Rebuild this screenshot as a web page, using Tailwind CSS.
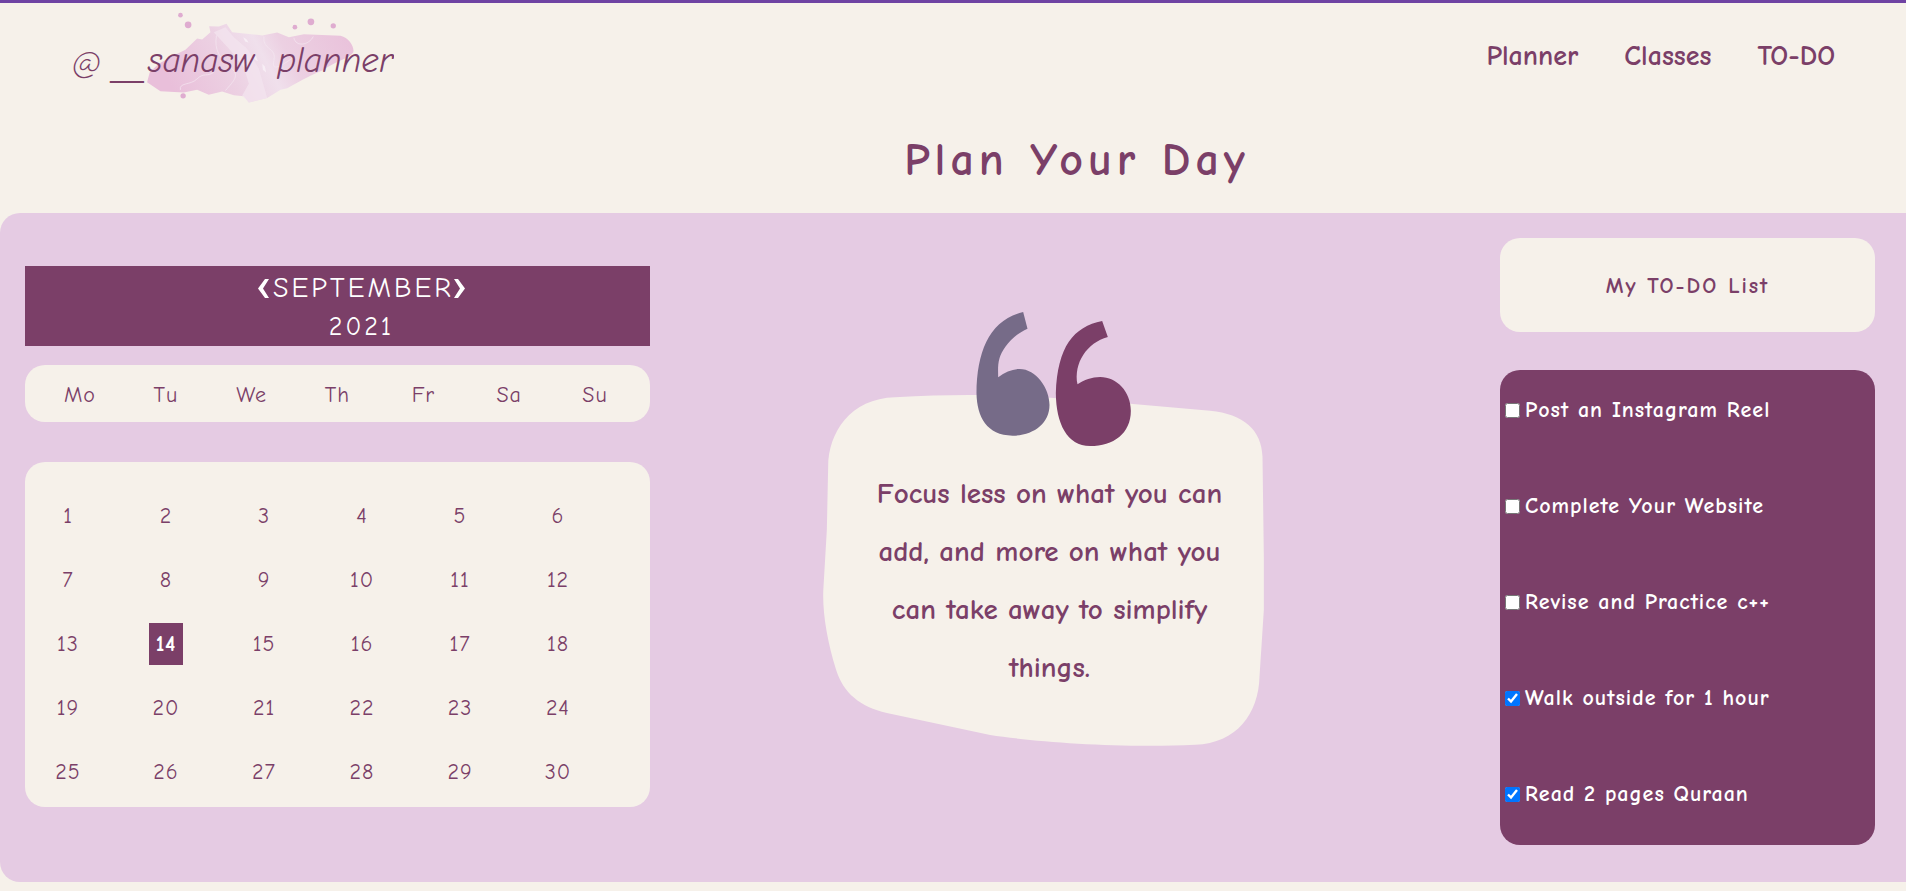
<!DOCTYPE html>
<html lang="en">
<head>
<meta charset="utf-8">
<meta name="viewport" content="width=device-width, initial-scale=1">
<title>Planner</title>
<script src="https://cdn.jsdelivr.net/npm/@tailwindcss/browser@4"></script>
</head>
<body class="min-h-screen overflow-x-hidden border-t-3 border-[#6f43a3] bg-[#f6f1ea] font-['Comic_Neue','Comic_Sans_MS',Lato,sans-serif] text-[#7b3f68]">
<header class="flex h-[104px] items-start justify-between pt-1 pr-[71px] pl-[67px]">
  <a href="#" aria-label="@__sanasw planner">
    <svg class="h-[97px] w-[327px]" viewBox="200 20 980 290">
      <defs>
        <linearGradient id="wash" x1="0" x2="1" y1=".2" y2="0">
          <stop offset="0" stop-color="#e9bfda"/><stop offset=".3" stop-color="#ecd0e2"/><stop offset=".5" stop-color="#f0e0ec"/><stop offset=".62" stop-color="#ecd0e2"/><stop offset="1" stop-color="#e9c0da"/>
        </linearGradient>
      </defs>
      <path fill="url(#wash)" d="M440 245 448 215 475 190 520 165 555 148 590 114 605 117 630 95 626 77 655 78 678 70 695 95 770 103 785 105 830 96 865 110 910 101 1020 106C1045 112 1062 140 1058 155 1045 175 1010 178 965 210 930 225 910 235 860 263L840 268 800 292 745 306 730 287 700 284 665 273 625 283 590 268 550 276 480 272Z"/>
      <path fill="#f3e6f0" opacity=".7" d="M640 95 675 80 700 110 740 145 775 205 800 292 745 306 725 285 745 250 730 200 690 150Z"/>
      <path fill="none" stroke="#f5e8f1" stroke-width="2" d="M648 105C640 150 660 175 690 200S700 240 675 270M790 108C785 150 830 140 820 180S850 190 880 170M540 268C535 245 570 255 590 235S620 230 640 215M880 112C885 140 925 135 938 108"/>
      <path fill="#f7eef5" d="M728 110l10 6 6 10-10-3zM758 160l9 8 5 14-10-6zM785 190l8 8 4 18-10-8z"/>
      <g fill="#dfacd0"><circle cx="540" cy="44" r="7"/><circle cx="563" cy="73" r="10"/><circle cx="548" cy="286" r="8"/><circle cx="883" cy="80" r="7"/><circle cx="931" cy="64" r="10"/><circle cx="998" cy="76" r="8"/></g>
      <g fill="#7b3f68" font-family="'Comic Neue', 'Comic Sans MS', Lato, sans-serif" font-style="italic" font-size="106">
        <text x="214" y="222" font-weight="300">@</text>
        <text x="330" y="230" font-family="'Liberation Sans', sans-serif" font-style="normal" font-size="90">__</text>
        <text x="442" y="214">sanasw</text><text x="830" y="214">planner</text>
      </g>
    </svg>
  </a>
  <nav class="flex gap-[46px] pt-7 text-[28px]/[42px] font-bold">
    <a href="#">Planner</a><a href="#">Classes</a><a href="#">TO-DO</a>
  </nav>
</header>
<h1 class="h-[106px] pt-6 pl-[248px] text-center text-[46px]/[60px] font-bold tracking-[5px]">Plan Your Day</h1>
<main class="flex h-[669px] items-start justify-between rounded-l-[20px] bg-[#e5cbe3] pr-[31px] pl-[25px]">
  <section class="w-[625px] pt-[53px]" aria-label="Calendar">
    <div class="bg-[#7b3f68] pt-0.5 pl-12 text-center text-white">
      <div class="flex h-10 items-center justify-center text-[28px] tracking-[3px]">
        <button type="button" aria-label="Previous month"><svg class="h-[19px] w-3" viewBox="0 0 12 19"><path fill="#fff" d="M8 0h4L6 9.500 12 19H8L1 9.500z"/></svg></button>
        <span class="pl-1">SEPTEMBER</span>
        <button type="button" aria-label="Next month"><svg class="h-[19px] w-3" viewBox="0 0 12 19"><path fill="#fff" d="M4 0H0l6 9.500L0 19h4l7-9.500z"/></svg></button>
      </div>
      <div class="text-[26px]/[38px] tracking-[3px]">2021</div>
    </div>
    <div class="mt-[19px] grid h-[57px] grid-cols-7 items-center rounded-[20px] bg-[#f6f1ea] px-3 pt-1 text-center text-[22px] tracking-[1px]">
      <span>Mo</span><span>Tu</span><span>We</span><span>Th</span><span>Fr</span><span>Sa</span><span>Su</span>
    </div>
    <div class="mt-10 grid grid-cols-6 gap-x-4 rounded-[20px] bg-[#f6f1ea] pt-[22px] pr-[51px] pb-[3px] pl-0.5 text-center text-[22px]/[64px] tracking-[1px]">
      <span>1</span><span>2</span><span>3</span><span>4</span><span>5</span><span>6</span>
      <span>7</span><span>8</span><span>9</span><span>10</span><span>11</span><span>12</span>
      <span>13</span><span><b class="bg-[#7b3f68] px-[7px] py-2 text-white">14</b></span><span>15</span><span>16</span><span>17</span><span>18</span>
      <span>19</span><span>20</span><span>21</span><span>22</span><span>23</span><span>24</span>
      <span>25</span><span>26</span><span>27</span><span>28</span><span>29</span><span>30</span>
    </div>
  </section>
  <figure class="mt-[97px] mr-[63px] grid w-[447px]">
    <svg class="col-start-1 row-start-1 h-[440px] w-full" viewBox="60 60 1340 1320" aria-hidden="true">
      <path fill="#f6f1ea" d="M84 530C84 430 150 325 285 322Q420 314 530 315L750 323 990 341 1230 362C1330 372 1385 420 1387 500L1391 800V960L1378 1160C1375 1270 1310 1360 1185 1364 960 1375 700 1355 570 1335L260 1269C180 1250 130 1210 108 1140 80 1050 65 960 70 890L80 720Z"/>
      <path fill="#766b88" d="M669 66 682 116C635 136 605 180 598 205 592 225 594 245 594 262 615 247 635 238 658 237 708 237 748 295 748 345 748 400 700 437 637 437 560 437 530 380 529 310 530 180 570 90 669 66Z"/>
      <path fill="#7b3f68" d="M906 93 923 141C860 158 820 220 832 283 852 270 875 261 900 261 950 261 992 305 992 362 992 430 940 468 870 468 800 468 768 400 767 310 772 170 820 110 906 93Z"/>
    </svg>
    <blockquote class="col-start-1 row-start-1 pt-[155px] pl-3 text-center text-[29px]/[58px] font-bold whitespace-nowrap">Focus less on what you can<br>add, and more on what you<br>can take away to simplify<br>things.</blockquote>
  </figure>
  <section class="w-[375px] pt-[25px] text-[22px] font-bold tracking-[1px]" aria-label="To-do list">
    <h2 class="rounded-[20px] bg-[#f6f1ea] pt-0.5 text-center text-[22px]/[92px] tracking-[2px]">My TO-DO List</h2>
    <ul class="mt-[38px] flex flex-col gap-14 rounded-[20px] bg-[#7b3f68] px-[5px] pt-5 pb-[31px] leading-10 text-white">
      <li><label class="flex items-center gap-[5px]"><input type="checkbox" class="size-[15px]">Post an Instagram Reel</label></li>
      <li><label class="flex items-center gap-[5px]"><input type="checkbox" class="size-[15px]">Complete Your Website</label></li>
      <li><label class="flex items-center gap-[5px]"><input type="checkbox" class="size-[15px]">Revise and Practice c++</label></li>
      <li><label class="flex items-center gap-[5px]"><input type="checkbox" checked class="size-[15px]">Walk outside for 1 hour</label></li>
      <li><label class="flex items-center gap-[5px]"><input type="checkbox" checked class="size-[15px]">Read 2 pages Quraan</label></li>
    </ul>
  </section>
</main>
</body>
</html>
